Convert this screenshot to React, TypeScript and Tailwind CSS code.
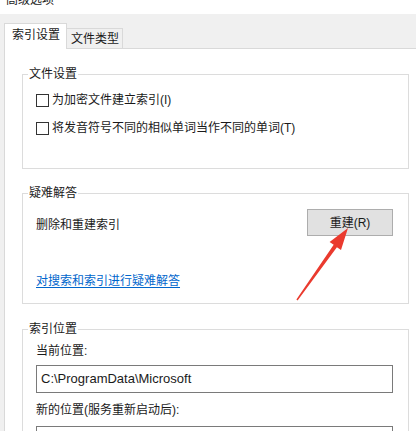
import React from "react";

const font = {
  fontFamily: '"Liberation Sans", "Noto Sans CJK SC", sans-serif',
};

function GroupBox({
  title,
  className,
  children,
}: {
  title: string;
  className?: string;
  children: React.ReactNode;
}) {
  return (
    <fieldset className="w-[387px] border border-[#dcdcdc]">
      <legend className="ml-[5px] px-[1px] text-[12px] leading-[16px] text-[#1a1a1a]">
        {title}
      </legend>
      <div className={className}>{children}</div>
    </fieldset>
  );
}

function CheckRow({ label }: { label: string }) {
  return (
    <label className="flex items-center gap-[3px] h-[16px]">
      <span className="w-[13px] h-[13px] border border-[#333333] bg-white shrink-0" />
      <span className="text-[12px] leading-[16px] text-[#1a1a1a]">{label}</span>
    </label>
  );
}

function Arrow() {
  return (
    <svg
      className="absolute left-0 top-0 pointer-events-none"
      width="416"
      height="431"
      viewBox="0 0 416 431"
    >
      <polygon
        points="348,228 341,250 336.9,247.2 297.6,300.4 296.4,299.6 333.7,244.8 329.6,242"
        fill="#ea3a2e"
      />
    </svg>
  );
}

export default function App() {
  return (
    <div
      className="relative w-[416px] h-[431px] overflow-hidden bg-[#f0f0f0] text-[#1a1a1a]"
      style={font}
    >
      {/* window title, mostly cut off */}
      <div className="h-[14px] bg-white overflow-hidden">
        <div className="pl-[6px] -mt-[8px] text-[12px] leading-[16px] text-[#222]">
          高级选项
        </div>
      </div>

      {/* tabs */}
      <div className="flex items-end h-[34px] pl-[4px]">
        <div className="relative z-10 -mb-px w-[63px] h-[26px] bg-white border border-b-0 border-[#d9d9d9] pt-[3px] pl-[7px] text-[12px] leading-[16px]">
          索引设置
        </div>
        <div className="w-[56px] h-[20px] border border-l-0 border-b-0 border-[#d9d9d9] pt-[2px] pl-[4px] text-[12px] leading-[16px]">
          文件类型
        </div>
      </div>

      {/* tab page */}
      <div className="ml-[4px] w-[440px] h-[400px] bg-white border-t border-l border-[#d9d9d9] pt-[17px] pl-[17px]">
        <GroupBox title="文件设置" className="pt-[10px] pb-[32px] pl-[13px]">
          <div className="flex flex-col gap-[12px]">
            <CheckRow label="为加密文件建立索引(I)" />
            <CheckRow label="将发音符号不同的相似单词当作不同的单词(T)" />
          </div>
        </GroupBox>

        <div className="h-[16px]" />
        <GroupBox title="疑难解答" className="pt-[8px] pb-[14px] pl-[13px] pr-[15px]">
          <div className="flex justify-between items-start">
            <span className="mt-[8px] text-[12px] leading-[16px]">删除和重建索引</span>
            <button className="w-[86px] h-[27px] bg-[#e1e1e1] border border-[#adadad] text-[12px] leading-[16px] text-[#1a1a1a]">
              重建(R)
            </button>
          </div>
          <a className="block mt-[37px] w-fit text-[12px] leading-[16px] text-[#0066cc] underline underline-offset-2">
            对搜索和索引进行疑难解答
          </a>
        </GroupBox>

        <div className="h-[17px]" />
        <GroupBox title="索引位置" className="pt-[6px] pl-[13px] pb-[20px]">
          <div className="text-[12px] leading-[16px]">当前位置:</div>
          <div className="mt-[6px] w-[357px] h-[28px] border border-[#7a7a7a] flex items-center pl-[4px] text-[13px] text-[#1a1a1a]">
            C:\ProgramData\Microsoft
          </div>
          <div className="mt-[9px] text-[12px] leading-[16px]">新的位置(服务重新启动后):</div>
          <div className="mt-[8px] w-[357px] h-[28px] border border-[#7a7a7a]" />
        </GroupBox>
      </div>

      <Arrow />
    </div>
  );
}
